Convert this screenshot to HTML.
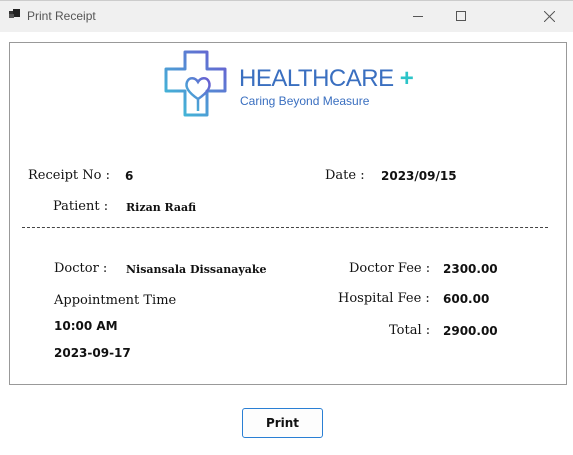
<!DOCTYPE html>
<html><head><style>
*{margin:0;padding:0;box-sizing:border-box}
body{width:573px;height:455px;background:#fff;position:relative;overflow:hidden;font-family:"DejaVu Serif",serif;color:#111}
.tb{position:absolute;left:0;top:0;width:573px;height:32px;background:#f0f0f0;border-top:1px solid #ccc}
.t{position:absolute;font-size:13px;white-space:nowrap}
.b{position:absolute;font-size:11px;font-weight:bold;white-space:nowrap}
.s{position:absolute;font-family:"DejaVu Sans",sans-serif;font-weight:bold;font-size:12px;white-space:nowrap}
</style></head><body>
<div class="tb">
<div style="position:absolute;left:9px;top:10px;width:6px;height:6px;background:#333"></div>
<div style="position:absolute;left:13px;top:8px;width:7px;height:8px;background:#222"></div>
<div style="position:absolute;left:9px;top:13px;width:5px;height:4px;background:#555"></div>
<div style="position:absolute;left:27px;top:8px;font-family:'Liberation Sans',sans-serif;font-size:12px;color:#555">Print Receipt</div>
<div style="position:absolute;left:413px;top:15px;width:10px;height:1px;background:#555"></div>
<div style="position:absolute;left:456px;top:10px;width:10px;height:10px;border:1px solid #555"></div>
<svg style="position:absolute;left:544px;top:10px" width="11" height="11"><path d="M0 0L11 11M11 0L0 11" stroke="#555" stroke-width="1"/></svg>
</div>
<div style="position:absolute;left:9px;top:42px;width:558px;height:343px;border:1px solid #999"></div>
<svg style="position:absolute;left:163px;top:49px" width="70" height="70" viewBox="0 0 70 70">
<defs><linearGradient id="g" x1="0" y1="1" x2="1" y2="0"><stop offset="0" stop-color="#3cc4d8"/><stop offset="1" stop-color="#6a5ad0"/></linearGradient></defs>
<path d="M22 3H44V20H62V42H44V66H22V42H3V20H22Z" fill="none" stroke="url(#g)" stroke-width="3" stroke-linejoin="round"/>
<path d="M35 62V50C26 44 22 38 24 33C26 28 32 28 35 33C38 28 44 28 46 33C48 38 44 44 35 50" fill="none" stroke="url(#g)" stroke-width="2.5"/>
</svg>
<div style="position:absolute;left:239px;top:65px;font-family:'Liberation Sans',sans-serif;font-size:24px;color:#3a6fc0;letter-spacing:-0.5px">HEALTHCARE <span style="color:#2cc4c8;font-weight:bold">+</span></div>
<div style="position:absolute;left:240px;top:94px;font-family:'Liberation Sans',sans-serif;font-size:12px;color:#3a6fc0">Caring Beyond Measure</div>
<div class="t" style="left:28px;top:168px">Receipt No :</div>
<div class="s" style="left:125px;top:169px">6</div>
<div class="t" style="left:325px;top:168px">Date :</div>
<div class="s" style="left:381px;top:169px">2023/09/15</div>
<div class="t" style="left:53px;top:199px">Patient :</div>
<div class="b" style="left:126px;top:201px">Rizan Raafi</div>
<div style="position:absolute;left:22px;top:227px;width:526px;border-top:1.5px dashed #444"></div>
<div class="t" style="left:54px;top:261px">Doctor :</div>
<div class="b" style="left:126px;top:263px">Nisansala Dissanayake</div>
<div class="t" style="left:349px;top:261px">Doctor Fee :</div>
<div class="s" style="left:443px;top:262px">2300.00</div>
<div class="t" style="left:54px;top:293px">Appointment Time</div>
<div class="t" style="left:338px;top:291px">Hospital Fee :</div>
<div class="s" style="left:443px;top:292px">600.00</div>
<div class="s" style="left:54px;top:319px">10:00 AM</div>
<div class="t" style="left:389px;top:323px">Total :</div>
<div class="s" style="left:443px;top:324px">2900.00</div>
<div class="s" style="left:54px;top:346px">2023-09-17</div>
<div style="position:absolute;left:242px;top:408px;width:81px;height:30px;border:1px solid #2a7fd4;border-radius:3px;background:#fdfdfd;font-family:'DejaVu Sans',sans-serif;font-weight:bold;font-size:12px;text-align:center;line-height:28px">Print</div>
</body></html>
